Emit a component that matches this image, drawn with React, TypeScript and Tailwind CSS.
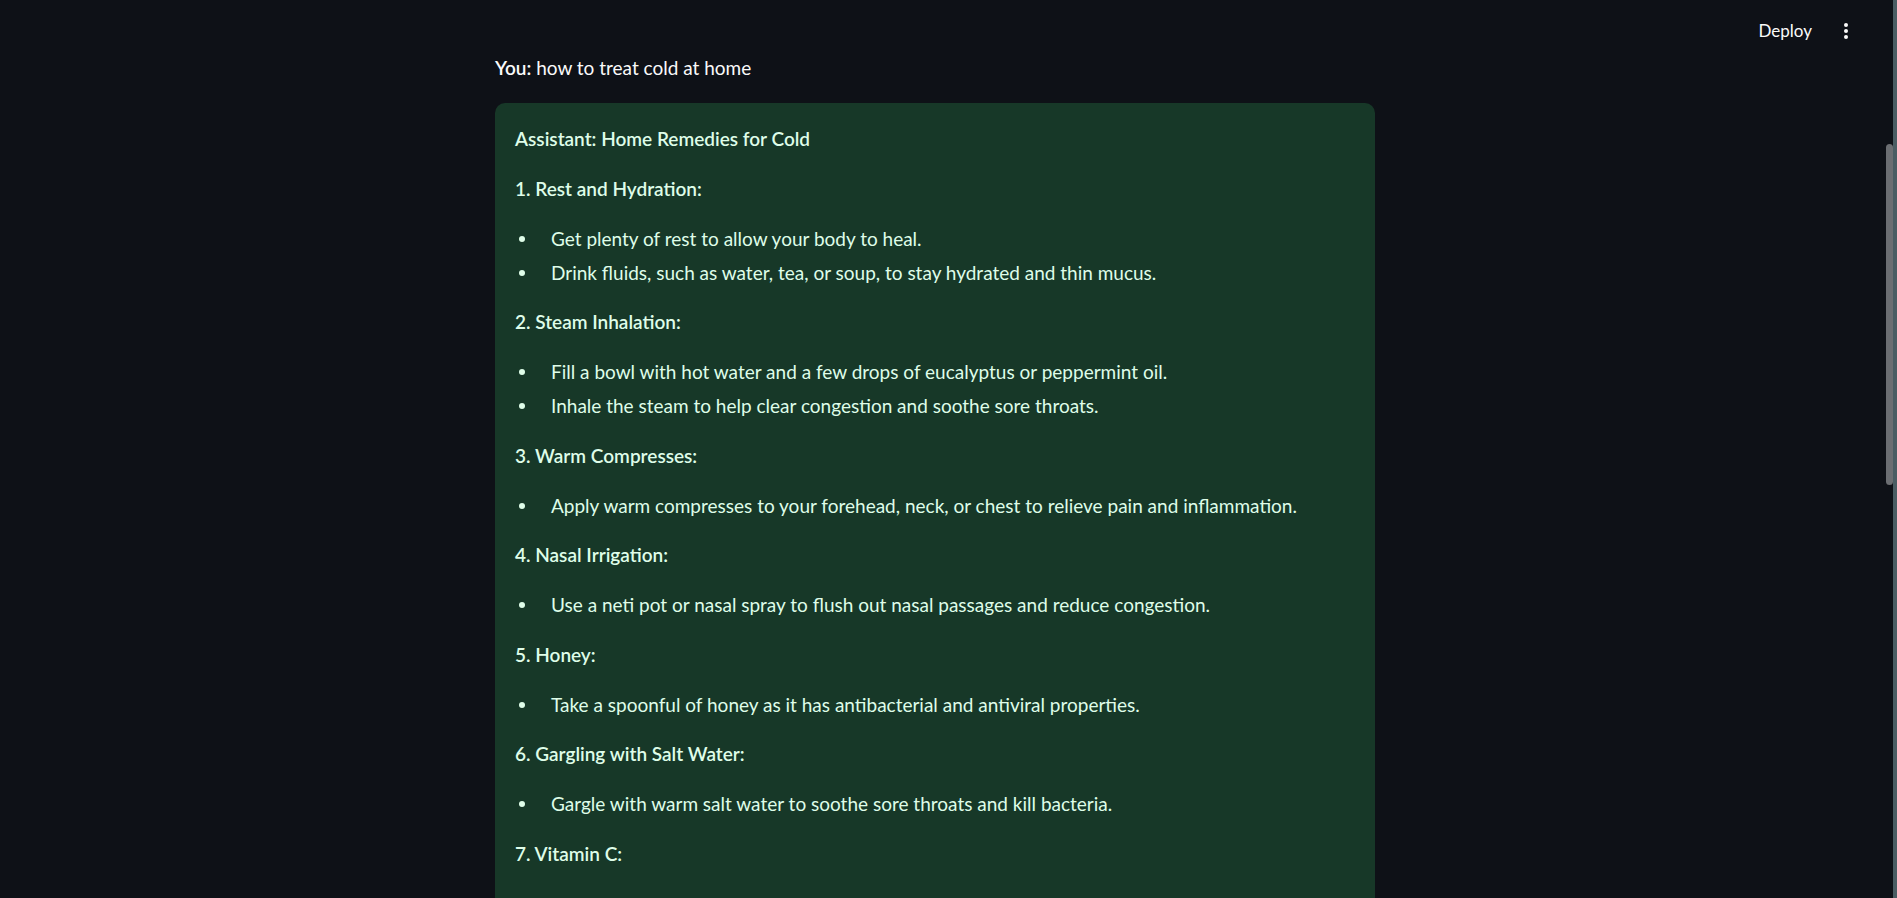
const sections: { title: string; items: string[] }[] = [
  {
    title: "1. Rest and Hydration:",
    items: [
      "Get plenty of rest to allow your body to heal.",
      "Drink fluids, such as water, tea, or soup, to stay hydrated and thin mucus.",
    ],
  },
  {
    title: "2. Steam Inhalation:",
    items: [
      "Fill a bowl with hot water and a few drops of eucalyptus or peppermint oil.",
      "Inhale the steam to help clear congestion and soothe sore throats.",
    ],
  },
  {
    title: "3. Warm Compresses:",
    items: ["Apply warm compresses to your forehead, neck, or chest to relieve pain and inflammation."],
  },
  {
    title: "4. Nasal Irrigation:",
    items: ["Use a neti pot or nasal spray to flush out nasal passages and reduce congestion."],
  },
  {
    title: "5. Honey:",
    items: ["Take a spoonful of honey as it has antibacterial and antiviral properties."],
  },
  {
    title: "6. Gargling with Salt Water:",
    items: ["Gargle with warm salt water to soothe sore throats and kill bacteria."],
  },
  { title: "7. Vitamin C:", items: [] },
];

export default function App() {
  return (
    <div
      className="flex h-screen w-full overflow-hidden bg-[#0e1117]"
      style={{ fontFamily: "Lato, 'Noto Sans', sans-serif" }}
    >
      <div className="relative flex-1 overflow-hidden">
        {/* header */}
        <div className="absolute right-[45px] top-[16px] flex items-center">
          <span className="text-[17px] leading-[30px] text-[#fafafa]">Deploy</span>
          <svg width="4" height="16" viewBox="0 0 4 16" className="ml-[32px]" fill="#fafafa">
            <circle cx="2" cy="2" r="2" />
            <circle cx="2" cy="8" r="2" />
            <circle cx="2" cy="14" r="2" />
          </svg>
        </div>

        {/* scrollbar thumb */}
        <div className="absolute right-0 top-[144px] h-[341px] w-[7px] rounded-full bg-[#6b6e72]" />

        <div className="ml-[495px] w-[880px] pt-[52px] text-[19px] leading-[32px]">
          <p className="text-[#fafafa]">
            <span className="font-semibold">You:</span> how to treat cold at home
          </p>

          <div className="mt-[19px] min-h-[900px] rounded-[10px] bg-[#173828] p-[20px] text-[#dffde9]">
            <p className="mb-[17.75px] font-semibold">Assistant: Home Remedies for Cold</p>
            {sections.map((s) => (
              <div key={s.title}>
                <p className="mb-[17.75px] font-semibold">{s.title}</p>
                {s.items.length > 0 && (
                  <ul className="mb-[17.75px] flex flex-col gap-[2px]">
                    {s.items.map((it) => (
                      <li key={it} className="flex items-center">
                        <span className="ml-[4px] h-[6px] w-[6px] shrink-0 rounded-full bg-[#dffde9]" />
                        <span className="ml-[26px]">{it}</span>
                      </li>
                    ))}
                  </ul>
                )}
              </div>
            ))}
          </div>
        </div>
      </div>
      <div className="w-[4px] shrink-0 bg-[#4a5d63]" />
    </div>
  );
}
